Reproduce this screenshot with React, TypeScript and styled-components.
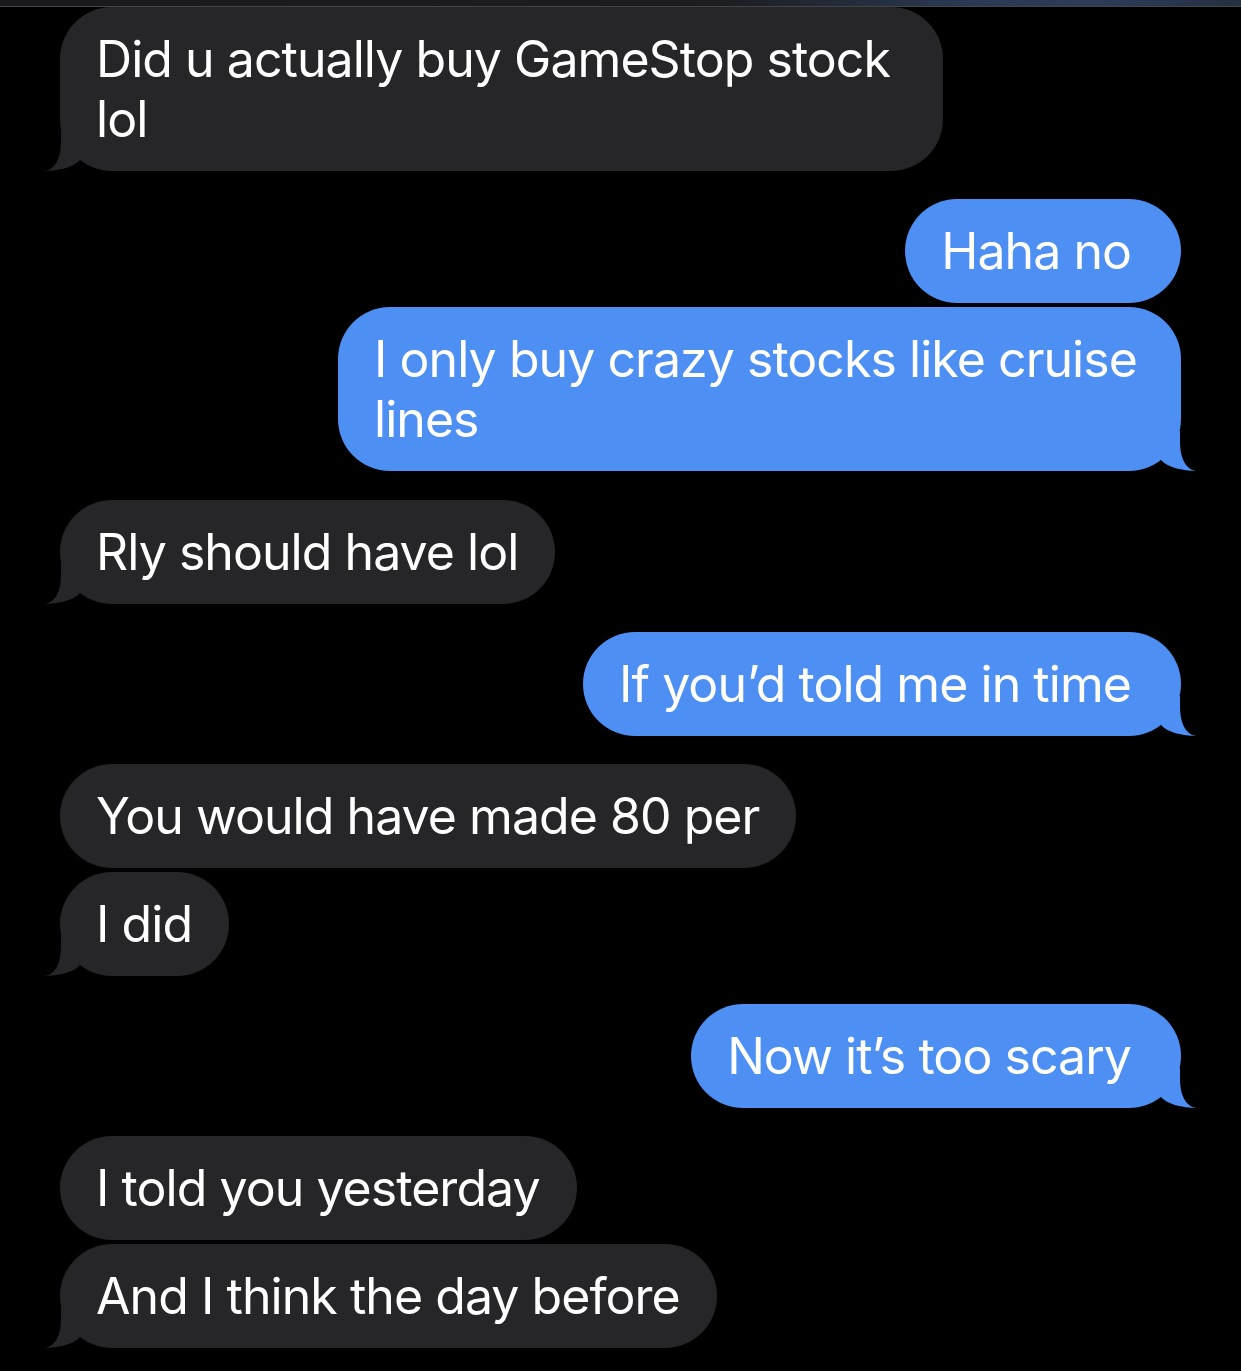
import React from "react";
import styled, { createGlobalStyle } from "styled-components";

const GlobalStyle = createGlobalStyle`
  html, body { margin: 0; padding: 0; background: #000; }
  body { font-family: Inter, "Noto Sans", "Liberation Sans", sans-serif; }
`;

const Page = styled.div`
  width: 1241px;
  height: 1371px;
  background: #000;
  display: flex;
  flex-direction: column;
  overflow: hidden;
`;

const TopBar = styled.div`
  height: 6px;
  flex: none;
  background: linear-gradient(90deg, #1a1a1c 0%, #1d1d20 58%, #2a3954 78%, #2c3c59 88%, #252f42 100%);
  border-bottom: 1px solid #444447;
`;

const Thread = styled.div`
  display: flex;
  flex-direction: column;
  padding: 0 60px;
`;

const Row = styled.div<{ $mine?: boolean; $top: number }>`
  display: flex;
  justify-content: ${(p) => (p.$mine ? "flex-end" : "flex-start")};
  margin-top: ${(p) => p.$top}px;
`;

const Bubble = styled.div<{ $mine?: boolean; $width?: number }>`
  position: relative;
  box-sizing: border-box;
  ${(p) => (p.$width ? `width: ${p.$width}px;` : "")}
  padding: 22px ${(p) => (p.$mine ? 50 : 37)}px 22px 36px;
  border-radius: 52px;
  background: ${(p) => (p.$mine ? "#4e8ff4" : "#262628")};
  color: #fff;
  font-family: Inter, "Noto Sans", "Liberation Sans", sans-serif;
  font-size: 50px;
  line-height: 60px;
  letter-spacing: -0.95px;
  white-space: nowrap;
`;

const TailSvg = styled.svg<{ $mine?: boolean }>`
  position: absolute;
  bottom: 0;
  width: 40px;
  height: 40px;
  ${(p) => (p.$mine ? "right: -16px; transform: scaleX(-1);" : "left: -16px;")}
`;

function Tail({ mine }: { mine?: boolean }) {
  return (
    <TailSvg $mine={mine} viewBox="0 0 40 40" aria-hidden>
      <path
        d="M0,40 C8,39.5 17,32 17,10 L17,0 L30,0 L36,29 C30,36 15,40 0,40 Z"
        fill={mine ? "#4e8ff4" : "#262628"}
      />
    </TailSvg>
  );
}

type Msg = { lines: string[]; mine?: boolean; tail?: boolean; top: number; width?: number };

const messages: Msg[] = [
  { lines: ["Did u actually buy GameStop stock", "lol"], tail: true, top: 0, width: 883 },
  { lines: ["Haha no"], mine: true, top: 28 },
  { lines: ["I only buy crazy stocks like cruise", "lines"], mine: true, tail: true, top: 4, width: 843 },
  { lines: ["Rly should have lol"], tail: true, top: 29 },
  { lines: ["If you\u2019d told me in time"], mine: true, tail: true, top: 28 },
  { lines: ["You would have made 80 per"], top: 28 },
  { lines: ["I did"], tail: true, top: 4 },
  { lines: ["Now it\u2019s too scary"], mine: true, tail: true, top: 28 },
  { lines: ["I told you yesterday"], top: 28 },
  { lines: ["And I think the day before"], tail: true, top: 4 },
];

export default function App() {
  return (
    <Page>
      <GlobalStyle />
      <TopBar />
      <Thread>
        {messages.map((m, i) => (
          <Row key={i} $mine={m.mine} $top={m.top}>
            <Bubble $mine={m.mine} $width={m.width}>
              {m.lines.map((l, j) => (
                <React.Fragment key={j}>
                  {j > 0 && <br />}
                  {l}
                </React.Fragment>
              ))}
              {m.tail && <Tail mine={m.mine} />}
            </Bubble>
          </Row>
        ))}
      </Thread>
    </Page>
  );
}
